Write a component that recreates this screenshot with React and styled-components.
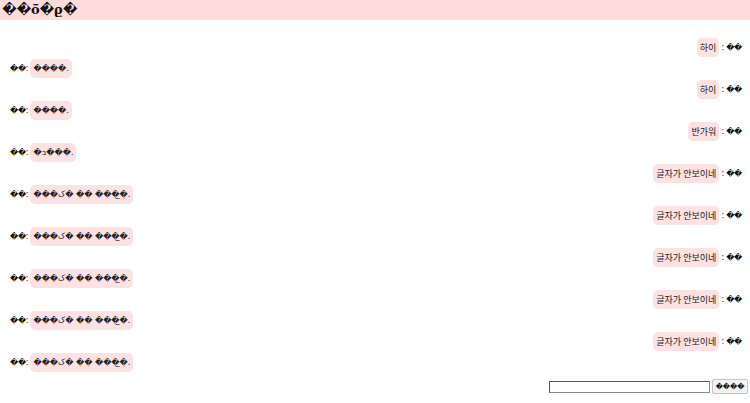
import React from "react";
import styled, { createGlobalStyle } from "styled-components";

const Global = createGlobalStyle`
  html, body { margin: 0; padding: 0; background: #fff; }
  body { font-family: "DejaVu Sans", "Noto Sans CJK KR", sans-serif; color: #111; }
`;

const Page = styled.div`
  width: 750px;
  height: 403px;
  display: flex;
  flex-direction: column;
`;

const Header = styled.h1`
  margin: 0;
  height: 20px;
  background: #fedcdc;
  padding: 0 0 0 2px;
  font-family: "DejaVu Serif", "Liberation Serif", serif;
  font-weight: bold;
  font-size: 13px;
  line-height: 22px;
  display: flex;
  align-items: center;
`;

const List = styled.div`
  margin-top: 17px;
  display: flex;
  flex-direction: column;
  padding: 0 8px 0 10px;
`;

const Row = styled.div`
  height: 21px;
  display: flex;
  align-items: center;
  justify-content: ${(p) => (p.$mine ? "flex-end" : "flex-start")};
`;

const Bubble = styled.span`
  background: #fde1e3;
  border-radius: 5px;
  padding: 0 3px;
  height: 19px;
  display: inline-flex;
  align-items: center;
  font-size: ${(p) => (p.$ko ? "9px" : "8px")};
  font-family: ${(p) =>
    p.$ko ? `"Noto Sans CJK KR", sans-serif` : `"DejaVu Sans", sans-serif`};
  color: #222;
  white-space: pre;
`;

const Name = styled.span`
  font-family: "DejaVu Sans", sans-serif;
  font-size: 8px;
  white-space: pre;
  letter-spacing: -0.3px;
`;

const InputRow = styled.div`
  margin-top: 6px;
  display: flex;
  justify-content: flex-end;
  align-items: center;
  gap: 2px;
  padding-right: 2px;
`;

const TextInput = styled.input`
  width: 157px;
  height: 10px;
  border: 1px solid #8a8a8a;
  border-top-color: #555;
  border-left-color: #555;
  padding: 0 1px;
  margin: 0;
  font-size: 9px;
`;

const SendButton = styled.button`
  height: 15px;
  width: 36px;
  padding: 0;
  margin: 0;
  border: 1px solid #c4c4c4;
  background: #f2f2f2;
  border-radius: 2px;
  font-family: "DejaVu Sans", sans-serif;
  font-size: 7px;
  color: #111;
`;

const R = "\uFFFD";
const broken = `${R}${R}${R}ک${R} ${R}${R} ${R}${R}${R}${R}\u0332.`;

const messages = [
  { mine: true, text: "하이" },
  { mine: false, text: `${R}${R}${R}${R}.` },
  { mine: true, text: "하이" },
  { mine: false, text: `${R}${R}${R}${R}.` },
  { mine: true, text: "반가워" },
  { mine: false, text: `${R}ב${R}${R}${R}.` },
  { mine: true, text: "글자가 안보이네" },
  { mine: false, text: broken },
  { mine: true, text: "글자가 안보이네" },
  { mine: false, text: broken },
  { mine: true, text: "글자가 안보이네" },
  { mine: false, text: broken },
  { mine: true, text: "글자가 안보이네" },
  { mine: false, text: broken },
  { mine: true, text: "글자가 안보이네" },
  { mine: false, text: broken },
];

export default function App() {
  return (
    <Page>
      <Global />
      <Header>{`${R}${R}ō̄${R}ϱ${R}`}</Header>
      <List>
        {messages.map((m, i) =>
          m.mine ? (
            <Row key={i} $mine>
              <Bubble $ko>{m.text}</Bubble>
              <Name>{` : ${R}${R}`}</Name>
            </Row>
          ) : (
            <Row key={i}>
              <Name>{`${R}${R}: `}</Name>
              <Bubble>{m.text}</Bubble>
            </Row>
          )
        )}
      </List>
      <InputRow>
        <TextInput type="text" />
        <SendButton>{`${R}${R}${R}${R}`}</SendButton>
      </InputRow>
    </Page>
  );
}
